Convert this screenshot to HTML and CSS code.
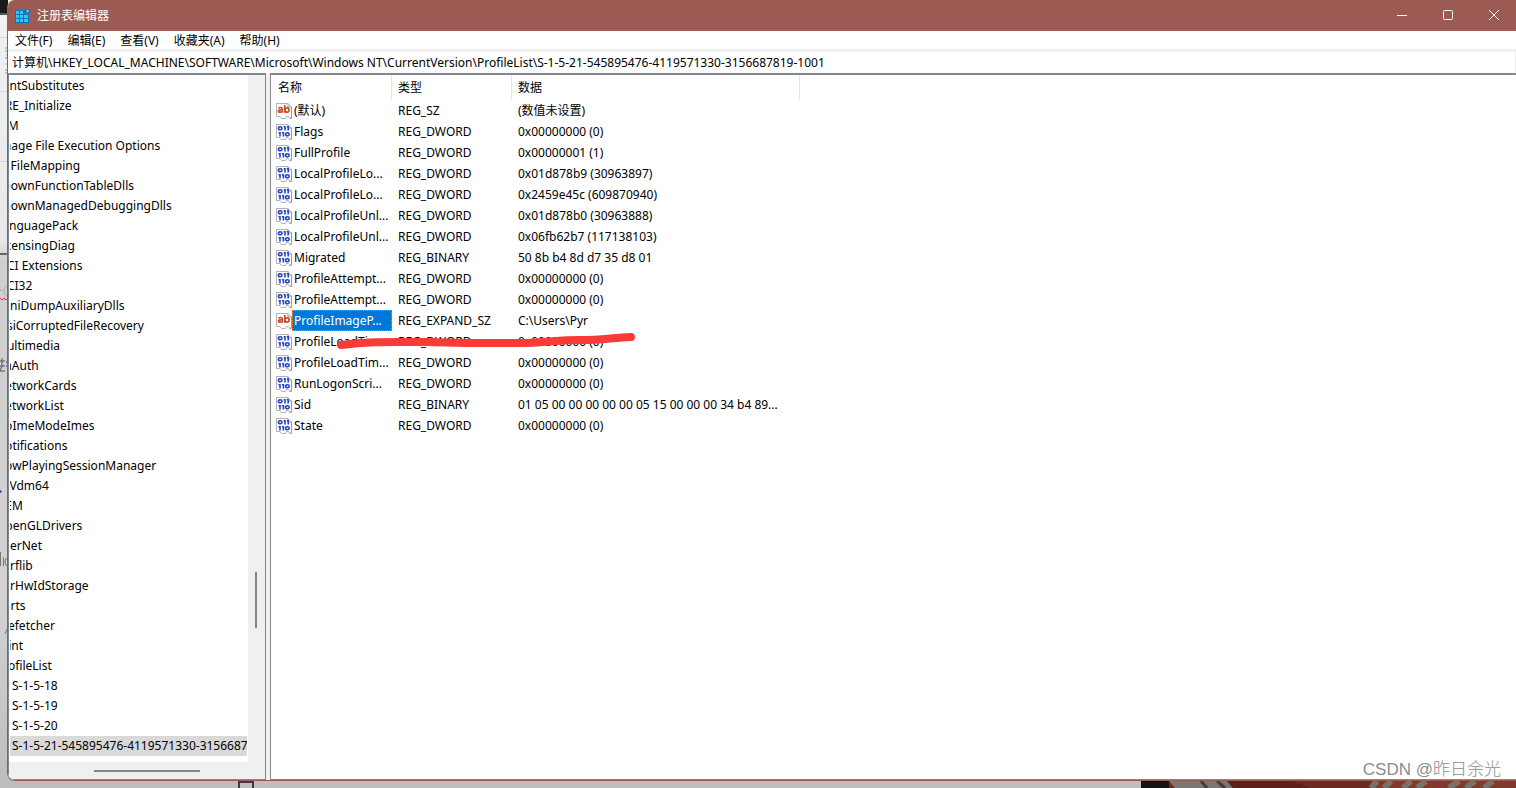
FILE: index.html
```
<!DOCTYPE html>
<html lang="zh-CN">
<head>
<meta charset="utf-8">
<title>注册表编辑器</title>
<link rel="stylesheet" href="styles.css">
</head>
<body>
<svg width="0" height="0" class="defs" aria-hidden="true">
  <defs>
    <g id="page">
      <path d="M.5 .5H12L15.5 4V15H13.5L12.500 13.500H10.500L9.500 15.500H5.500L4 13.500H.5Z" fill="#fff" stroke="#b4b4b4"/>
      <path d="M12 .5V4H15.500V15.500M15 15.500H13.500" fill="none" stroke="#999"/>
    </g>
    <symbol id="ab" viewBox="0 0 16 16">
      <use href="#page"/>
      <g fill="none" stroke="#d2492a" stroke-width="1.700">
        <path d="M2.500 5.300C4 4.100 6.300 4.200 6.300 6V9.800M6.300 6.800C3.500 6.600 2.200 7.400 2.400 8.300C2.700 9.700 5.400 9.300 6.200 8.100"/>
        <path d="M8.800 2V9.800"/><ellipse cx="11" cy="7" rx="2.100" ry="2.200"/>
      </g>
    </symbol>
    <symbol id="bin" viewBox="0 0 16 16">
      <use href="#page"/>
      <g fill="none" stroke="#2447c8" stroke-width="1.600">
        <ellipse cx="4.200" cy="4.300" rx="1.800" ry="1.500"/>
        <path d="M9 2V6.500M7.600 2.800H9M12.200 2V6.500M10.800 2.800H12.200M4 8V12.500M2.500 8.800H4M7.400 8V12.500M6 8.800H7.400"/>
        <ellipse cx="11.400" cy="10.300" rx="1.800" ry="1.500"/>
      </g>
    </symbol>
  </defs>
</svg>
<div class="desktop">
  <svg class="edge" viewBox="0 0 8 788" preserveAspectRatio="xMinYMin slice" aria-hidden="true">
    <rect width="8" height="14" fill="#1b1b1b"/><rect y="13" width="8" height="2" fill="#555"/>
    <path d="M0 37.500H8M0 91.500H8M0 161.500H8" stroke="#d6d6d6"/>
    <path d="M5 48H8M5 51H8M6 55H8M5 58H8M6 64H8M5 70H8M5 73H8" stroke="#999"/>
    <rect y="253" width="8" height="2" fill="#666"/>
    <path d="M0 290H2M8 286Q4 286 4 291T8 295" fill="none" stroke="#aaa"/>
    <path d="M0 298L2 300L4 298L6 300L8 298" fill="none" stroke="#e0353d"/>
    <path d="M0 361H5M0 366H5M2 358V366L0 371H5M6 362H8M6 366H8" fill="none" stroke="#555"/>
    <circle cy="491.500" r="1.500" fill="#3c3c9a"/>
    <path d="M.5 552V566M3.500 557V566M8 558Q5 558 5 562T8 566" fill="none" stroke="#777"/>
    <path d="M5 634L7 629" stroke="#777"/>
  </svg>
  <main class="window">
    <header class="titlebar">
      <svg class="logo" viewBox="0 0 16 16" aria-hidden="true">
        <path d="M0 2H10V6H14V15H0Z" fill="#0876b8"/>
        <g fill="#39c5f4"><path d="M1 3h3v3H1zM5 3h3v3H5zM1 7h3v3H1zM5 7h3v3H5zM9 7h4v3H9zM1 11h3v3H1zM5 11h3v3H5zM9 11h4v3H9z"/></g>
        <path d="M12.500 0L15.500 3L12.500 6L9.500 3Z" fill="#087dc0"/><path d="M12.500 1.500L14 3L12.500 4.500L11 3Z" fill="#5ad8ff"/>
      </svg>
      <h1>注册表编辑器</h1>
      <div class="controls">
        <button aria-label="最小化"><svg viewBox="0 0 12 12"><path d="M1 5.500H11"/></svg></button>
        <button aria-label="最大化"><svg viewBox="0 0 12 12"><rect x="1.500" y=".5" width="9" height="9" rx="1"/></svg></button>
        <button aria-label="关闭"><svg viewBox="0 0 12 12"><path d="M1 0L11 10M11 0L1 10"/></svg></button>
      </div>
    </header>
    <nav class="menu"><button>文件(F)</button><button>编辑(E)</button><button>查看(V)</button><button>收藏夹(A)</button><button>帮助(H)</button></nav>
    <input class="address" aria-label="地址" value="计算机\HKEY_LOCAL_MACHINE\SOFTWARE\Microsoft\Windows NT\CurrentVersion\ProfileList\S-1-5-21-545895476-4119571330-3156687819-1001">
    <div class="panes">
      <aside class="tree">
        <ul>
          <li>FontSubstitutes</li><li>GRE_Initialize</li><li>ICM</li><li>Image File Execution Options</li><li>IniFileMapping</li><li>KnownFunctionTableDlls</li><li>KnownManagedDebuggingDlls</li><li>LanguagePack</li><li>LicensingDiag</li><li>MCI Extensions</li><li>MCI32</li><li>MiniDumpAuxiliaryDlls</li><li>MsiCorruptedFileRecovery</li><li>Multimedia</li><li>NaAuth</li><li>NetworkCards</li><li>NetworkList</li><li>NoImeModeImes</li><li>Notifications</li><li>NowPlayingSessionManager</li><li>NtVdm64</li><li>OEM</li><li>OpenGLDrivers</li><li>PeerNet</li><li>Perflib</li><li>PerHwIdStorage</li><li>Ports</li><li>Prefetcher</li><li>Print</li><li>ProfileList</li>
          <li class="child">S-1-5-18</li><li class="child">S-1-5-19</li><li class="child">S-1-5-20</li><li class="child current">S-1-5-21-545895476-4119571330-3156687819-1001</li>
        </ul>
        <div class="vbar"><i></i></div>
        <div class="hbar"><i></i></div>
      </aside>
      <section class="values">
        <table>
          <colgroup><col class="c-name"><col class="c-type"><col class="c-data"></colgroup>
          <thead><tr><th>名称</th><th>类型</th><th>数据</th></tr></thead>
          <tbody>
            <tr><td><div class="name"><svg><use href="#ab"/></svg><span>(默认)</span></div></td><td>REG_SZ</td><td>(数值未设置)</td></tr>
            <tr><td><div class="name"><svg><use href="#bin"/></svg><span>Flags</span></div></td><td>REG_DWORD</td><td>0x00000000 (0)</td></tr>
            <tr><td><div class="name"><svg><use href="#bin"/></svg><span>FullProfile</span></div></td><td>REG_DWORD</td><td>0x00000001 (1)</td></tr>
            <tr><td><div class="name"><svg><use href="#bin"/></svg><span>LocalProfileLo...</span></div></td><td>REG_DWORD</td><td>0x01d878b9 (30963897)</td></tr>
            <tr><td><div class="name"><svg><use href="#bin"/></svg><span>LocalProfileLo...</span></div></td><td>REG_DWORD</td><td>0x2459e45c (609870940)</td></tr>
            <tr><td><div class="name"><svg><use href="#bin"/></svg><span>LocalProfileUnl...</span></div></td><td>REG_DWORD</td><td>0x01d878b0 (30963888)</td></tr>
            <tr><td><div class="name"><svg><use href="#bin"/></svg><span>LocalProfileUnl...</span></div></td><td>REG_DWORD</td><td>0x06fb62b7 (117138103)</td></tr>
            <tr><td><div class="name"><svg><use href="#bin"/></svg><span>Migrated</span></div></td><td>REG_BINARY</td><td>50 8b b4 8d d7 35 d8 01</td></tr>
            <tr><td><div class="name"><svg><use href="#bin"/></svg><span>ProfileAttempt...</span></div></td><td>REG_DWORD</td><td>0x00000000 (0)</td></tr>
            <tr><td><div class="name"><svg><use href="#bin"/></svg><span>ProfileAttempt...</span></div></td><td>REG_DWORD</td><td>0x00000000 (0)</td></tr>
            <tr class="selected"><td><div class="name"><svg><use href="#ab"/></svg><span>ProfileImageP...</span></div></td><td>REG_EXPAND_SZ</td><td>C:\Users\Pyr</td></tr>
            <tr><td><div class="name"><svg><use href="#bin"/></svg><span>ProfileLoadTim...</span></div></td><td>REG_DWORD</td><td>0x00000000 (0)</td></tr>
            <tr><td><div class="name"><svg><use href="#bin"/></svg><span>ProfileLoadTim...</span></div></td><td>REG_DWORD</td><td>0x00000000 (0)</td></tr>
            <tr><td><div class="name"><svg><use href="#bin"/></svg><span>RunLogonScri...</span></div></td><td>REG_DWORD</td><td>0x00000000 (0)</td></tr>
            <tr><td><div class="name"><svg><use href="#bin"/></svg><span>Sid</span></div></td><td>REG_BINARY</td><td>01 05 00 00 00 00 00 05 15 00 00 00 34 b4 89...</td></tr>
            <tr><td><div class="name"><svg><use href="#bin"/></svg><span>State</span></div></td><td>REG_DWORD</td><td>0x00000000 (0)</td></tr>
          </tbody>
        </table>
        <svg class="marker" viewBox="0 0 300 18" aria-hidden="true"><path d="M5 12C35 8 55 9 90 9L130 10L190 10C215 9 220 7 245 7C265 7 275 5 295 4" fill="none" stroke="#f93a37" stroke-width="8" stroke-linecap="round" stroke-linejoin="round"/></svg>
      </section>
    </div>
  </main>
  <div class="below" aria-hidden="true">
    <span class="box"></span>
    <svg class="photo" viewBox="0 0 375 7" preserveAspectRatio="none">
      <rect width="375" height="7" fill="#6b2a20"/><rect width="28" height="7" fill="#151214"/>
      <path d="M28 0H86L92 7H34Z" fill="#7b7672"/><path d="M60 0L66 7M76 0L84 7" stroke="#443e3b" stroke-width="3"/>
      <path d="M86 0H150L170 7H92Z" fill="#5c2019"/><path d="M232 0H375V7H232Z" fill="#81392d"/>
      <path d="M236 0L230 7M250 0L243 7M270 0L262 7M285 0L276 7M318 0L308 7M334 0L325 7M352 0L343 7" stroke="#77716d" stroke-width="6"/>
    </svg>
  </div>
  <p class="watermark">CSDN @昨日余光</p>
</div>
</body>
</html>
```

FILE: styles.css
```
* { box-sizing: border-box; }
body {
  margin: 0;
  font: 12px/20px "Noto Sans", "Noto Sans CJK SC", sans-serif;
  color: #000;
}
button, input { font: inherit; color: inherit; border: 0; background: none; padding: 0; }
.defs { position: absolute; }
.desktop {
  position: relative;
  display: grid;
  grid-template-columns: 7px minmax(0, 1fr);
  grid-template-rows: 1fr 7px;
  min-height: 100vh;
  background: linear-gradient(#f2f2f2 0, #e8e8e8 240px, #cfcfcf 260px, #d2d2d2 600px, #bdbdbd);
}
.edge { grid-area: 1 / 1; width: 8px; height: 0; min-height: 100%; }
.window {
  grid-area: 1 / 2;
  position: relative;
  display: flex;
  flex-direction: column;
  overflow: hidden;
  border: solid #9c5b52;
  border-width: 0 0 1px 1px;
  border-radius: 8px 0 0 8px;
  background: #f0f0f0;
}
.titlebar { display: flex; align-items: center; height: 31px; padding-left: 7px; background: #9c5b52; color: #fff; }
.titlebar h1 { margin: 0 0 0 6px; font-size: 12px; font-weight: 400; }
.logo { width: 16px; height: 16px; }
.controls { display: flex; margin: 0 -1px 0 auto; }
.controls button { display: flex; align-items: center; justify-content: center; width: 46px; height: 31px; }
.controls svg { width: 12px; height: 12px; fill: none; stroke: #fff; }
.menu { display: flex; gap: 15px; height: 18px; padding-left: 7px; background: #fff; line-height: 20px; }
.address {
  width: 100%;
  height: 24px;
  padding: 0 4px 2px;
  border: solid #f0f0f0;
  border-width: 3px 1px 0 0;
  background: #fff;
  outline: 0;
}
.panes {
  flex: 1;
  display: grid;
  grid-template-columns: 258px minmax(0, 1fr);
  gap: 4px;
}
.tree {
  display: grid;
  grid-template-columns: minmax(0, 1fr) 17px;
  grid-template-rows: 1fr 17px;
  border: solid #828790;
  border-width: 2px 1px 1px;
  background: #f0f0f0;
}
.tree ul { margin: 0; padding: 1px 0 6px; border-left: 1px solid #fff; list-style: none; overflow: hidden; background: #fff; }
.tree li { height: 20px; margin-left: -14px; white-space: nowrap; }
.tree .child { margin-left: 0; padding-left: 2px; }
.tree .current { margin-right: 1px; overflow: hidden; background: #d9d9d9; }
.vbar { display: flex; align-items: flex-end; padding: 0 0 134px 7px; }
.vbar i { width: 2px; height: 56px; background: #858585; }
.hbar { display: flex; align-items: center; padding-left: 85px; }
.hbar i { width: 106px; height: 2px; background: #858585; }
.values { position: relative; border: solid #828790; border-width: 2px 0 1px 1px; background: #fff; }
table { width: 529px; table-layout: fixed; border-collapse: separate; border-spacing: 0; }
.c-name { width: 121px; }
.c-type { width: 120px; }
.c-data { width: 288px; }
th { height: 25px; padding: 0 6px; border-right: 1px solid #e5e5e5; font-weight: 400; text-align: left; }
td { height: 21px; padding: 0 0 0 6px; white-space: nowrap; }
th:first-child { padding-left: 7px; }
td:first-child { padding-left: 5px; }
.name { display: flex; align-items: center; }
.name svg { flex: none; width: 16px; height: 16px; }
.name span { flex: 1; height: 21px; padding: 0 1px; border: 1px solid transparent; line-height: 19px; }
.selected .name span { border: 1px dotted #f08a28; background: #0078d7; color: #fff; }
.marker { position: absolute; left: 65px; top: 258px; width: 300px; height: 18px; }
.below { grid-area: 2 / 1 / 3 / 3; display: flex; justify-content: space-between; background: #bebebe; }
.box { width: 16px; margin-left: 238px; border: 2px solid #3b3a48; border-bottom: 0; }
.photo { width: 375px; height: 7px; }
.watermark {
  position: absolute;
  right: 15px;
  bottom: 6px;
  margin: 0;
  font: 300 17px/24px "Liberation Sans", "Noto Sans CJK SC", sans-serif;
  color: #8c8c8c;
}
```
